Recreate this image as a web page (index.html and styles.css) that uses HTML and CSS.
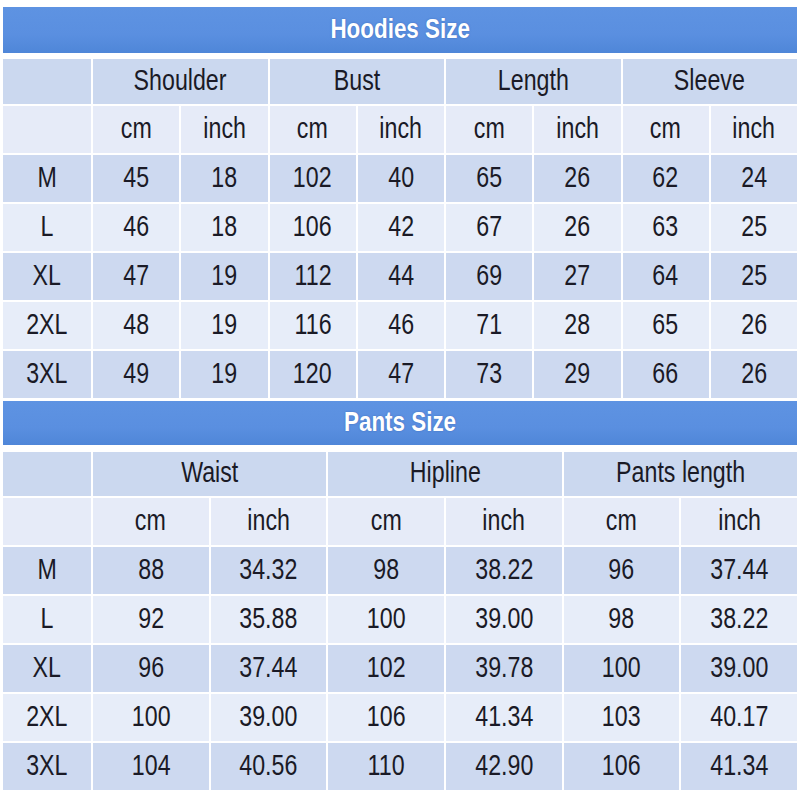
FILE: index.html
```html
<!DOCTYPE html>
<html>
<head>
<meta charset="utf-8">
<link rel="stylesheet" href="styles.css">
</head>
<body>
<div class="page">
  <section class="chart hoodies">
    <div class="title"><span class="t">Hoodies Size</span></div>
    <div class="grid g8">
      <div class="c grp"></div>
      <div class="c grp span2"><span class="t">Shoulder</span></div>
      <div class="c grp span2"><span class="t">Bust</span></div>
      <div class="c grp span2"><span class="t">Length</span></div>
      <div class="c grp span2"><span class="t">Sleeve</span></div>

      <div class="c unit"></div>
      <div class="c unit"><span class="t">cm</span></div><div class="c unit"><span class="t">inch</span></div>
      <div class="c unit"><span class="t">cm</span></div><div class="c unit"><span class="t">inch</span></div>
      <div class="c unit"><span class="t">cm</span></div><div class="c unit"><span class="t">inch</span></div>
      <div class="c unit"><span class="t">cm</span></div><div class="c unit"><span class="t">inch</span></div>

      <div class="c dk"><span class="t">M</span></div><div class="c dk"><span class="t">45</span></div><div class="c dk"><span class="t">18</span></div><div class="c dk"><span class="t">102</span></div><div class="c dk"><span class="t">40</span></div><div class="c dk"><span class="t">65</span></div><div class="c dk"><span class="t">26</span></div><div class="c dk"><span class="t">62</span></div><div class="c dk"><span class="t">24</span></div>
      <div class="c lt"><span class="t">L</span></div><div class="c lt"><span class="t">46</span></div><div class="c lt"><span class="t">18</span></div><div class="c lt"><span class="t">106</span></div><div class="c lt"><span class="t">42</span></div><div class="c lt"><span class="t">67</span></div><div class="c lt"><span class="t">26</span></div><div class="c lt"><span class="t">63</span></div><div class="c lt"><span class="t">25</span></div>
      <div class="c dk"><span class="t">XL</span></div><div class="c dk"><span class="t">47</span></div><div class="c dk"><span class="t">19</span></div><div class="c dk"><span class="t">112</span></div><div class="c dk"><span class="t">44</span></div><div class="c dk"><span class="t">69</span></div><div class="c dk"><span class="t">27</span></div><div class="c dk"><span class="t">64</span></div><div class="c dk"><span class="t">25</span></div>
      <div class="c lt"><span class="t">2XL</span></div><div class="c lt"><span class="t">48</span></div><div class="c lt"><span class="t">19</span></div><div class="c lt"><span class="t">116</span></div><div class="c lt"><span class="t">46</span></div><div class="c lt"><span class="t">71</span></div><div class="c lt"><span class="t">28</span></div><div class="c lt"><span class="t">65</span></div><div class="c lt"><span class="t">26</span></div>
      <div class="c dk"><span class="t">3XL</span></div><div class="c dk"><span class="t">49</span></div><div class="c dk"><span class="t">19</span></div><div class="c dk"><span class="t">120</span></div><div class="c dk"><span class="t">47</span></div><div class="c dk"><span class="t">73</span></div><div class="c dk"><span class="t">29</span></div><div class="c dk"><span class="t">66</span></div><div class="c dk"><span class="t">26</span></div>
    </div>
  </section>

  <section class="chart pants">
    <div class="title"><span class="t">Pants Size</span></div>
    <div class="grid g6">
      <div class="c grp"></div>
      <div class="c grp span2"><span class="t">Waist</span></div>
      <div class="c grp span2"><span class="t">Hipline</span></div>
      <div class="c grp span2"><span class="t">Pants length</span></div>

      <div class="c unit"></div>
      <div class="c unit"><span class="t">cm</span></div><div class="c unit"><span class="t">inch</span></div>
      <div class="c unit"><span class="t">cm</span></div><div class="c unit"><span class="t">inch</span></div>
      <div class="c unit"><span class="t">cm</span></div><div class="c unit"><span class="t">inch</span></div>

      <div class="c dk"><span class="t">M</span></div><div class="c dk"><span class="t">88</span></div><div class="c dk"><span class="t">34.32</span></div><div class="c dk"><span class="t">98</span></div><div class="c dk"><span class="t">38.22</span></div><div class="c dk"><span class="t">96</span></div><div class="c dk"><span class="t">37.44</span></div>
      <div class="c lt"><span class="t">L</span></div><div class="c lt"><span class="t">92</span></div><div class="c lt"><span class="t">35.88</span></div><div class="c lt"><span class="t">100</span></div><div class="c lt"><span class="t">39.00</span></div><div class="c lt"><span class="t">98</span></div><div class="c lt"><span class="t">38.22</span></div>
      <div class="c dk"><span class="t">XL</span></div><div class="c dk"><span class="t">96</span></div><div class="c dk"><span class="t">37.44</span></div><div class="c dk"><span class="t">102</span></div><div class="c dk"><span class="t">39.78</span></div><div class="c dk"><span class="t">100</span></div><div class="c dk"><span class="t">39.00</span></div>
      <div class="c lt"><span class="t">2XL</span></div><div class="c lt"><span class="t">100</span></div><div class="c lt"><span class="t">39.00</span></div><div class="c lt"><span class="t">106</span></div><div class="c lt"><span class="t">41.34</span></div><div class="c lt"><span class="t">103</span></div><div class="c lt"><span class="t">40.17</span></div>
      <div class="c dk"><span class="t">3XL</span></div><div class="c dk"><span class="t">104</span></div><div class="c dk"><span class="t">40.56</span></div><div class="c dk"><span class="t">110</span></div><div class="c dk"><span class="t">42.90</span></div><div class="c dk"><span class="t">106</span></div><div class="c dk"><span class="t">41.34</span></div>
    </div>
  </section>
</div>
</body>
</html>
```

FILE: styles.css
```css
html, body {
  margin: 0;
  padding: 0;
  background: #ffffff;
}

.page {
  width: 794px;
  padding: 7px 3px 0 3px;
  font-family: "Liberation Sans", Arial, sans-serif;
  color: #1a1a26;
}

.t {
  display: inline-block;
  white-space: nowrap;
  transform: scaleX(0.8);
}

.title {
  height: 46px;
  box-sizing: border-box;
  padding-bottom: 3px;
  display: flex;
  align-items: center;
  justify-content: center;
  background: linear-gradient(#5e93e2, #5a8fe0 60%, #4f86d8);
  color: #ffffff;
  font-weight: bold;
  font-size: 28px;
  text-shadow: 0 0 2px rgba(40, 80, 160, 0.6);
}

.hoodies .title {
  margin-bottom: 6px;
}

.pants {
  margin-top: 3px;
}

.pants .title {
  height: 44px;
  margin-bottom: 7px;
}

.grid {
  display: grid;
  gap: 2px;
  grid-auto-rows: 47px;
}

.g8 {
  grid-template-columns: 88px repeat(8, 1fr);
  grid-template-rows: 45px;
}

.g6 {
  grid-template-columns: 88px repeat(6, 1fr);
  grid-template-rows: 44px;
}

.c {
  box-sizing: border-box;
  padding-bottom: 3px;
  display: flex;
  align-items: center;
  justify-content: center;
  font-size: 29px;
}

.span2 {
  grid-column: span 2;
}

.grp {
  background: #cbd8ef;
}

.unit {
  background: #e6ebf8;
}

.dk {
  background: #cdd9f0;
}

.lt {
  background: #e7edf9;
}
```
